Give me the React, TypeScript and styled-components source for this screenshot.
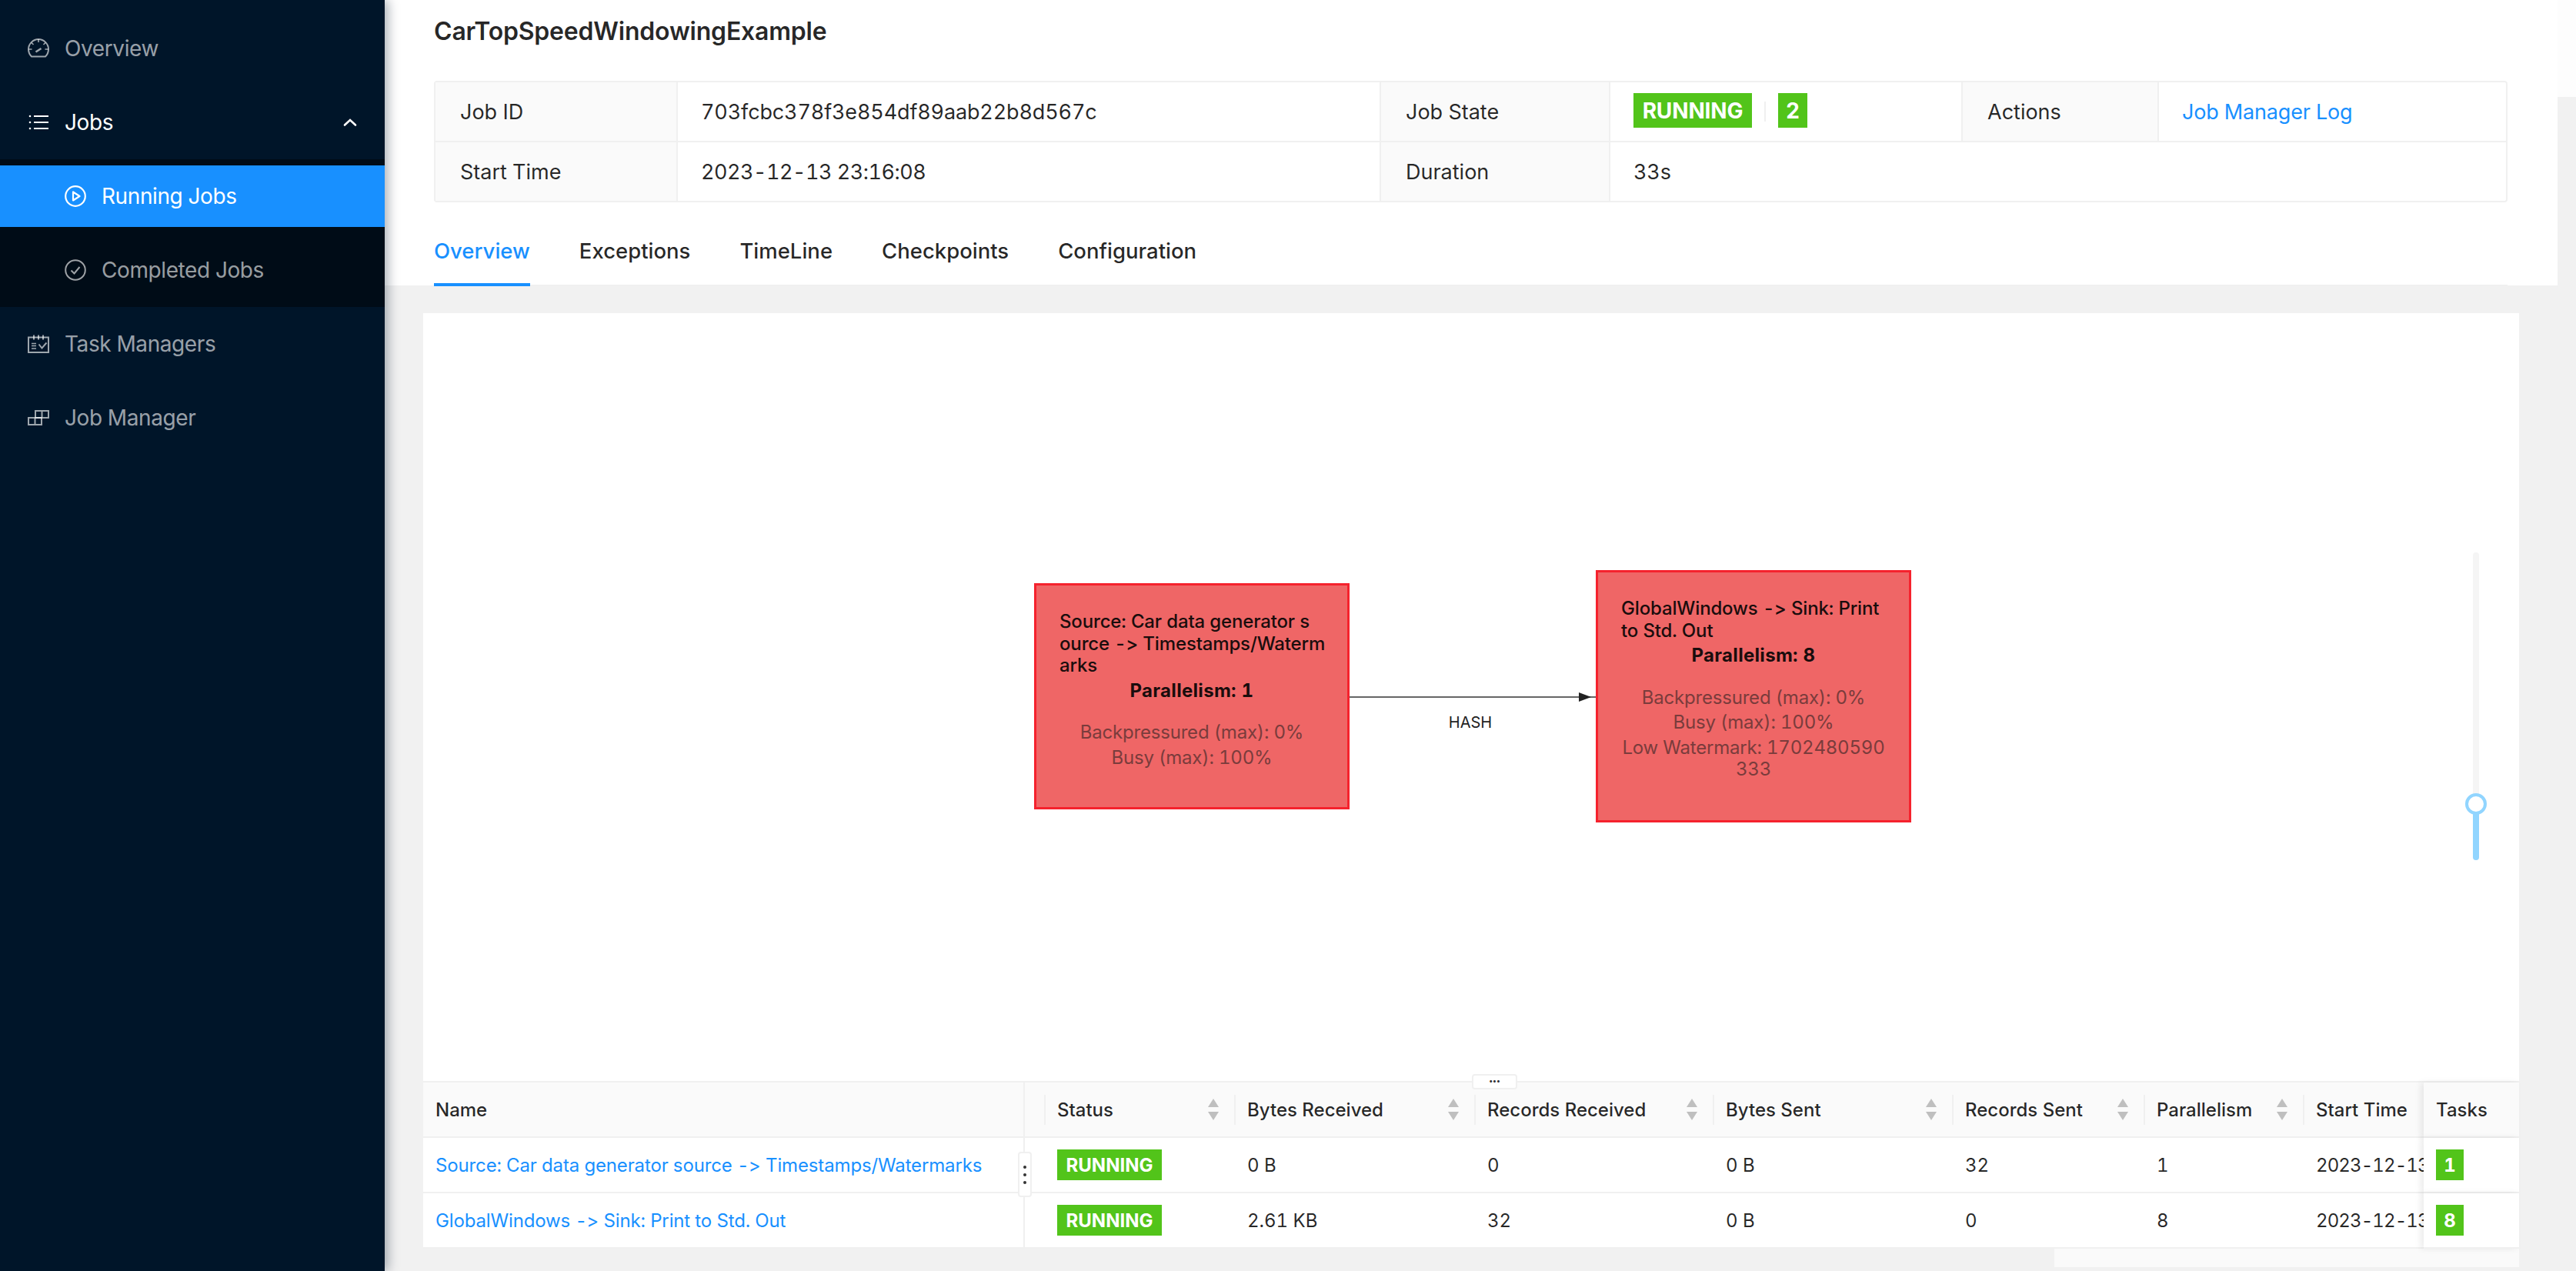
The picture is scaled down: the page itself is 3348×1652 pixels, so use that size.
import React from 'react';
import styled, { createGlobalStyle } from 'styled-components';

const GlobalStyle = createGlobalStyle`
  html, body {
    margin: 0;
    padding: 0;
    background: #f1f1f1;
  }
  body {
    font-family: Inter, "Noto Sans", "Liberation Sans", sans-serif;
    font-feature-settings: 'calt' 0, 'tnum' 1;
    color: rgba(0, 0, 0, 0.85);
  }
`;

const ITEM_STROKE = { fill: 'none', stroke: 'currentColor', strokeWidth: 2 };

const DashboardIcon = () => (
  <svg width="28" height="28" viewBox="0 0 28 28" {...ITEM_STROKE}>
    <path d="M5 24.5 C2.5 22 1 18.8 1 15 C1 8 7 2 14 2 C21 2 27 8 27 15 C27 18.8 25.5 22 23 24.5 Z" />
    <path d="M14 2v4M1.5 15h4M22.5 15h4M5 6.5l2.5 2.5M23 6.5l-2.5 2.5" strokeWidth="1.6" />
    <path d="M10.5 18.5l7-4.5" strokeWidth="2.6" />
  </svg>
);

const ListIcon = () => (
  <svg width="28" height="28" viewBox="0 0 28 28" fill="none" stroke="currentColor" strokeWidth="2">
    <path d="M8 6h19M8 14h19M8 22h19" />
    <circle cx="3" cy="6" r="1.3" fill="currentColor" stroke="none" />
    <circle cx="3" cy="14" r="1.3" fill="currentColor" stroke="none" />
    <circle cx="3" cy="22" r="1.3" fill="currentColor" stroke="none" />
  </svg>
);

const PlayCircleIcon = () => (
  <svg width="28" height="28" viewBox="0 0 28 28" {...ITEM_STROKE}>
    <circle cx="14" cy="14" r="12.8" strokeWidth="2.2" />
    <path d="M11 8.5v11l8.5-5.5z" strokeWidth="2.2" strokeLinejoin="round" />
  </svg>
);

const CheckCircleIcon = () => (
  <svg width="28" height="28" viewBox="0 0 28 28" {...ITEM_STROKE}>
    <circle cx="14" cy="14" r="12.8" />
    <path d="M8.5 14.5l4 4 7-8.5" />
  </svg>
);

const ScheduleIcon = () => (
  <svg width="28" height="24" viewBox="0 0 28 24" {...ITEM_STROKE}>
    <path d="M1 3.5h26v19.5H1z" />
    <path d="M8 0.5v6M14 0.5v6M20 0.5v6" />
    <path d="M5 11.5h6M5 14.5h6M5 18h6" strokeWidth="1.6" />
    <path d="M14.5 12.5l4 5 6-7" />
  </svg>
);

const BuildIcon = () => (
  <svg width="28" height="20" viewBox="0 0 28 20" {...ITEM_STROKE}>
    <path d="M1 10h17v9H1zM9.5 10v9" />
    <path d="M10 1h17v9H10zM18.5 1v9" />
  </svg>
);

const ChevronUp = () => (
  <svg width="18" height="12" viewBox="0 0 18 12" fill="none" stroke="currentColor" strokeWidth="2.6" strokeLinecap="round">
    <path d="M2 9.5L9 3l7 6.5" />
  </svg>
);

const SortCarets = () => (
  <SortIcon viewBox="0 0 18 28" width="18" height="28">
    <path d="M9 0l7 11H2z" />
    <path d="M2 17h14l-7 11z" />
  </SortIcon>
);

interface MenuEntry {
  label: string;
  icon: React.ReactNode;
}

const SUB_ITEMS: (MenuEntry & { active?: boolean })[] = [
  { label: 'Running Jobs', icon: <PlayCircleIcon />, active: true },
  { label: 'Completed Jobs', icon: <CheckCircleIcon /> },
];

const COLUMN_WIDTHS = [782, 25, 247, 312, 310, 311, 249, 207, 157, 124];

const COLUMNS = ['Status', 'Bytes Received', 'Records Received', 'Bytes Sent', 'Records Sent', 'Parallelism'];

const VERTICES = [
  {
    name: 'Source: Car data generator source -> Timestamps/Watermarks',
    bytesIn: '0 B',
    recordsIn: '0',
    bytesOut: '0 B',
    recordsOut: '32',
    parallelism: '1',
  },
  {
    name: 'GlobalWindows -> Sink: Print to Std. Out',
    bytesIn: '2.61 KB',
    recordsIn: '32',
    bytesOut: '0 B',
    recordsOut: '0',
    parallelism: '8',
  },
];

const TABS = ['Overview', 'Exceptions', 'TimeLine', 'Checkpoints', 'Configuration'];

const App: React.FC = () => {
  return (
    <Page>
      <GlobalStyle />
      <Sidebar>
        <MenuItem>
          <IconSlot>
            <DashboardIcon />
          </IconSlot>
          Overview
        </MenuItem>
        <MenuItem $open>
          <IconSlot>
            <ListIcon />
          </IconSlot>
          Jobs
          <ChevronSlot>
            <ChevronUp />
          </ChevronSlot>
        </MenuItem>
        <SubMenu>
          {SUB_ITEMS.map(item => (
            <SubItem key={item.label} $active={item.active}>
              <IconSlot>{item.icon}</IconSlot>
              {item.label}
            </SubItem>
          ))}
        </SubMenu>
        <MenuItem>
          <IconSlot>
            <ScheduleIcon />
          </IconSlot>
          Task Managers
        </MenuItem>
        <MenuItem>
          <IconSlot>
            <BuildIcon />
          </IconSlot>
          Job Manager
        </MenuItem>
      </Sidebar>

      <Main>
        <Header>
          <Title>CarTopSpeedWindowingExample</Title>
          <Descriptions>
            <DescRow>
              <DescLabel $width={315}>Job ID</DescLabel>
              <DescValue $width={914}>703fcbc378f3e854df89aab22b8d567c</DescValue>
              <DescLabel $width={298}>Job State</DescLabel>
              <DescValue $width={458}>
                <HeaderTag>RUNNING</HeaderTag>
                <TagDivider />
                <HeaderCount>2</HeaderCount>
              </DescValue>
              <DescLabel $width={255}>Actions</DescLabel>
              <DescValue>
                <Link>Job Manager Log</Link>
              </DescValue>
            </DescRow>
            <DescRow>
              <DescLabel $width={315}>Start Time</DescLabel>
              <DescValue $width={914}>
                <DateText>2023-12-13 23:16:08</DateText>
              </DescValue>
              <DescLabel $width={298}>Duration</DescLabel>
              <DescValue>33s</DescValue>
            </DescRow>
          </Descriptions>
          <Tabs>
            {TABS.map((tab, index) => (
              <Tab key={tab} $active={index === 0}>
                {tab}
              </Tab>
            ))}
          </Tabs>
        </Header>

        <Panel>
          <Canvas>
            <Node $x={794} $y={351} $h={294}>
              <NodeName>
                Source: Car data generator s<br />
                ource -&gt; Timestamps/Waterm<br />
                arks
              </NodeName>
              <NodeParallelism>Parallelism: 1</NodeParallelism>
              <NodeMetric $first>Backpressured (max): 0%</NodeMetric>
              <NodeMetric>Busy (max): 100%</NodeMetric>
            </Node>

            <EdgeLine width="320" height="24" viewBox="0 0 320 24">
              <path d="M0 12H320" stroke="#666" strokeWidth="2" />
              <path d="M298 6l16 6-16 6z" fill="#222" />
            </EdgeLine>
            <EdgeLabel>HASH</EdgeLabel>

            <Node $x={1524} $y={334} $h={328}>
              <NodeName>
                GlobalWindows -&gt; Sink: Print
                <br />
                to Std. Out
              </NodeName>
              <NodeParallelism>Parallelism: 8</NodeParallelism>
              <NodeMetric $first>Backpressured (max): 0%</NodeMetric>
              <NodeMetric>Busy (max): 100%</NodeMetric>
              <NodeMetric>
                Low Watermark: 1702480590
                <br />
                333
              </NodeMetric>
            </Node>

            <ZoomRail>
              <ZoomFill />
              <ZoomHandle />
            </ZoomRail>
          </Canvas>

          <TableSection>
            <ResizeBarHandle>...</ResizeBarHandle>
            <ColumnHandle>
              <Dot />
              <Dot />
              <Dot />
            </ColumnHandle>
            <Table>
              <colgroup>
                {COLUMN_WIDTHS.map((width, index) => (
                  <col key={index} width={width} />
                ))}
              </colgroup>
              <thead>
                <tr>
                  <NameHead>Name</NameHead>
                  <SpacerHead />
                  {COLUMNS.map(column => (
                    <HeadCell key={column}>
                      {column}
                      <SortCarets />
                    </HeadCell>
                  ))}
                  <HeadCell>Start Time</HeadCell>
                  <TasksHead>Tasks</TasksHead>
                </tr>
              </thead>
              <tbody>
                {VERTICES.map(vertex => (
                  <tr key={vertex.name}>
                    <NameCell>
                      <TableLink>{vertex.name}</TableLink>
                    </NameCell>
                    <SpacerCell />
                    <Cell>
                      <StatusTag>RUNNING</StatusTag>
                    </Cell>
                    <Cell>{vertex.bytesIn}</Cell>
                    <Cell>{vertex.recordsIn}</Cell>
                    <Cell>{vertex.bytesOut}</Cell>
                    <Cell>{vertex.recordsOut}</Cell>
                    <Cell>{vertex.parallelism}</Cell>
                    <DateCell>2023-12-13 23:16:08</DateCell>
                    <TasksCell>
                      <StatusTag $narrow>{vertex.parallelism}</StatusTag>
                    </TasksCell>
                  </tr>
                ))}
              </tbody>
            </Table>
          </TableSection>
          <ScrollStub />
        </Panel>
      </Main>
    </Page>
  );
};

export default App;

const Page = styled.div`
  display: flex;
  width: 3348px;
  height: 1652px;
  overflow: hidden;
`;

const Sidebar = styled.nav`
  flex: none;
  width: 500px;
  padding-top: 23px;
  box-sizing: border-box;
  background: #001529;
  box-shadow: 4px 0 14px rgba(0, 21, 41, 0.35);
  position: relative;
  z-index: 2;
  font-size: 28px;
  letter-spacing: -0.4px;
`;

const MenuItem = styled.div<{ $open?: boolean }>`
  display: flex;
  align-items: center;
  height: 80px;
  margin-bottom: 16px;
  padding-left: 36px;
  color: ${props => (props.$open ? '#fff' : 'rgba(255, 255, 255, 0.62)')};
`;

const IconSlot = styled.span`
  display: inline-flex;
  align-items: center;
  justify-content: center;
  width: 28px;
  height: 28px;
  margin-right: 20px;
`;

const ChevronSlot = styled.span`
  display: inline-flex;
  margin-left: auto;
  margin-right: 36px;
`;

const SubMenu = styled.div`
  background: #000c17;
  padding: 8px 0;
  margin-top: -8px;
  margin-bottom: 8px;
`;

const SubItem = styled.div<{ $active?: boolean }>`
  display: flex;
  align-items: center;
  height: 80px;
  padding-left: 84px;
  & + & {
    margin-top: 16px;
  }
  background: ${props => (props.$active ? '#1890ff' : 'transparent')};
  color: ${props => (props.$active ? '#fff' : 'rgba(255, 255, 255, 0.62)')};
`;

const Main = styled.main`
  flex: 1;
  min-width: 0;
  background: linear-gradient(#fdfdfd, #fdfdfd) top / 100% 126px no-repeat, #f1f1f1;
`;

const Header = styled.header`
  width: 2824px;
  height: 371px;
  box-sizing: border-box;
  padding-left: 64px;
  background: #fff;
`;

const Title = styled.h1`
  margin: 0 0 23px;
  height: 82px;
  line-height: 82px;
  font-size: 32px;
  font-weight: 600;
  letter-spacing: -0.2px;
`;

const Descriptions = styled.div`
  width: 2695px;
  box-sizing: border-box;
  border: 2px solid #f0f0f0;
  border-radius: 4px;
  font-size: 27px;
`;

const DescRow = styled.div`
  display: flex;
  height: 76px;
  & + & {
    border-top: 2px solid #f0f0f0;
  }
`;

const DescLabel = styled.div<{ $width: number }>`
  flex: none;
  display: flex;
  align-items: center;
  box-sizing: border-box;
  width: ${props => props.$width}px;
  padding-left: 32px;
  background: #fafafa;
  border-right: 2px solid #f0f0f0;
`;

const DescValue = styled.div<{ $width?: number }>`
  display: flex;
  align-items: center;
  box-sizing: border-box;
  padding-left: 30px;
  letter-spacing: -0.15px;
  ${props => (props.$width ? `flex: none; width: ${props.$width}px; border-right: 2px solid #f0f0f0;` : 'flex: 1;')}
`;

const DateText = styled.span`
  letter-spacing: -0.5px;
`;

const Link = styled.a`
  color: #1890ff;
`;

const HeaderTag = styled.span`
  display: inline-flex;
  align-items: center;
  justify-content: center;
  width: 154px;
  height: 45px;
  background: #52c41a;
  color: #fff;
  font-size: 28px;
  font-weight: 700;
  margin-top: -3px;
`;

const HeaderCount = styled(HeaderTag)`
  width: 38px;
`;

const TagDivider = styled.span`
  width: 2px;
  height: 26px;
  margin: 0 16px;
  background: #f0f0f0;
`;

const Tabs = styled.div`
  display: flex;
  gap: 64px;
  width: 2695px;
  height: 109px;
  align-items: flex-end;
  box-shadow: inset 0 -2px #f0f0f0;
`;

const Tab = styled.div<{ $active?: boolean }>`
  line-height: 44px;
  padding-bottom: 20px;
  font-size: 27.5px;
  font-weight: 500;
  border-bottom: 4px solid ${props => (props.$active ? '#1890ff' : 'transparent')};
  color: ${props => (props.$active ? '#1890ff' : 'rgba(0, 0, 0, 0.85)')};
`;

const Panel = styled.section`
  width: 2724px;
  margin: 36px 0 0 50px;
`;

const Canvas = styled.div`
  position: relative;
  height: 998px;
  background: #fff;
`;

const Node = styled.div<{ $x: number; $y: number; $h: number }>`
  position: absolute;
  left: ${props => props.$x}px;
  top: ${props => props.$y}px;
  width: 410px;
  height: ${props => props.$h}px;
  box-sizing: border-box;
  padding: 33px 30px 0;
  background: #ef6666;
  border: 3px solid #f5222d;
  font-size: 24px;
  line-height: 28.5px;
  text-align: center;
  white-space: nowrap;
  color: #1a0d0d;
`;

const NodeName = styled.div`
  text-align: left;
  font-weight: 500;
  letter-spacing: -0.15px;
`;

const NodeParallelism = styled.div`
  margin-top: 4px;
  font-weight: 700;
  letter-spacing: 0.3px;
`;

const NodeMetric = styled.div<{ $first?: boolean }>`
  margin-top: ${props => (props.$first ? 26 : 4)}px;
  color: #7a3c3c;
  letter-spacing: -0.2px;
`;

const EdgeLine = styled.svg`
  position: absolute;
  left: 1204px;
  top: 487px;
`;

const EdgeLabel = styled.div`
  position: absolute;
  left: 1361px;
  top: 532px;
  transform: translate(-50%, -50%);
  font-size: 20px;
  color: #222;
`;

const ZoomRail = styled.div`
  position: absolute;
  left: 2664px;
  top: 311px;
  width: 8px;
  height: 400px;
  border-radius: 4px;
  background: #f5f5f5;
`;

const ZoomFill = styled.div`
  position: absolute;
  left: 0;
  right: 0;
  bottom: 0;
  height: 73px;
  border-radius: 0 0 4px 4px;
  background: #91d5ff;
`;

const ZoomHandle = styled.div`
  position: absolute;
  left: -10px;
  top: 313px;
  width: 28px;
  height: 28px;
  box-sizing: border-box;
  border-radius: 50%;
  border: 4px solid #91d5ff;
  background: #fff;
`;

const TableSection = styled.div`
  position: relative;
  background: #fff;
`;

const ResizeBarHandle = styled.div`
  position: absolute;
  left: 1363px;
  top: -9px;
  z-index: 2;
  width: 59px;
  height: 20px;
  box-sizing: border-box;
  border: 2px solid #f0f0f0;
  border-radius: 4px;
  background: #fff;
  font-size: 18px;
  font-weight: 700;
  line-height: 6px;
  text-align: center;
  color: #333;
`;

const ColumnHandle = styled.div`
  position: absolute;
  left: 773px;
  top: 92px;
  z-index: 2;
  display: flex;
  flex-direction: column;
  align-items: center;
  justify-content: center;
  gap: 6px;
  width: 18px;
  height: 59px;
  box-sizing: border-box;
  border: 2px solid #f0f0f0;
  border-radius: 4px;
  background: #fff;
`;

const Dot = styled.span`
  width: 4px;
  height: 4px;
  border-radius: 50%;
  background: #333;
`;

const Table = styled.table`
  width: 2724px;
  table-layout: fixed;
  border-collapse: separate;
  border-spacing: 0;
  border-top: 2px solid #f0f0f0;
  font-size: 24px;
`;

const HeadCell = styled.th`
  position: relative;
  height: 70px;
  box-sizing: content-box;
  padding: 0 0 0 17px;
  background: #fafafa;
  border-bottom: 2px solid #f0f0f0;
  font-weight: 500;
  text-align: left;
  white-space: nowrap;
  overflow: hidden;
  &::before {
    content: '';
    position: absolute;
    left: 0;
    top: 16px;
    height: 39px;
    width: 2px;
    background: #f0f0f0;
  }
`;

const NameHead = styled(HeadCell)`
  padding-left: 16px;
  border-right: 2px solid #f0f0f0;
  &::before {
    display: none;
  }
`;

const SpacerHead = styled(HeadCell)`
  padding: 0;
  &::before {
    display: none;
  }
`;

const TasksHead = styled(HeadCell)`
  padding-left: 16px;
  box-shadow: -4px 0 8px rgba(0, 0, 0, 0.08);
  z-index: 1;
  &::before {
    display: none;
  }
`;

const SortIcon = styled.svg`
  position: absolute;
  right: 18px;
  top: 21px;
  fill: #bfbfbf;
`;

const Cell = styled.td`
  height: 70px;
  padding: 0 0 0 17px;
  background: #fff;
  border-bottom: 2px solid #f0f0f0;
  white-space: nowrap;
  overflow: hidden;
`;

const NameCell = styled(Cell)`
  padding-left: 16px;
  border-right: 2px solid #f0f0f0;
`;

const SpacerCell = styled(Cell)`
  padding: 0;
`;

const DateCell = styled(Cell)`
  letter-spacing: -0.9px;
`;

const TasksCell = styled(Cell)`
  position: relative;
  padding-left: 16px;
  box-shadow: -4px 0 8px rgba(0, 0, 0, 0.08);
  z-index: 1;
`;

const TableLink = styled.a`
  color: #1890ff;
  letter-spacing: -0.14px;
`;

const StatusTag = styled.span<{ $narrow?: boolean }>`
  display: flex;
  align-items: center;
  justify-content: center;
  width: ${props => (props.$narrow ? 36 : 136)}px;
  height: 40px;
  background: #52c41a;
  color: #fff;
  font-weight: 700;
`;

const ScrollStub = styled.div`
  width: 604px;
  height: 24px;
  margin: 0 0 0 auto;
  background: #fafafa;
`;
